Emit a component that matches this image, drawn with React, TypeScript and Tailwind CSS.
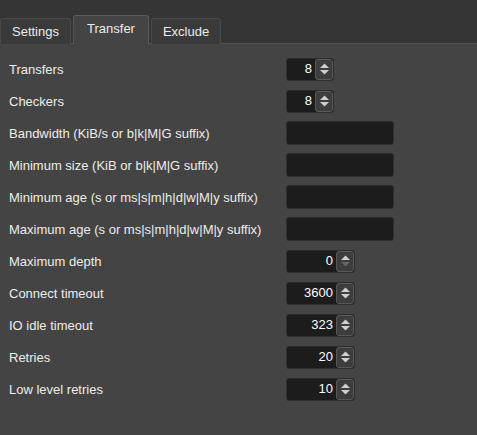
import React from "react";

type Row =
  | { label: string; kind: "spin"; value: string; wide?: boolean; upOnly?: boolean }
  | { label: string; kind: "text" };

const ROWS: Row[] = [
  { label: "Transfers", kind: "spin", value: "8" },
  { label: "Checkers", kind: "spin", value: "8" },
  { label: "Bandwidth (KiB/s or b|k|M|G suffix)", kind: "text" },
  { label: "Minimum size (KiB or b|k|M|G suffix)", kind: "text" },
  { label: "Minimum age (s or ms|s|m|h|d|w|M|y suffix)", kind: "text" },
  { label: "Maximum age (s or ms|s|m|h|d|w|M|y suffix)", kind: "text" },
  { label: "Maximum depth", kind: "spin", value: "0", wide: true, upOnly: true },
  { label: "Connect timeout", kind: "spin", value: "3600", wide: true },
  { label: "IO idle timeout", kind: "spin", value: "323", wide: true },
  { label: "Retries", kind: "spin", value: "20", wide: true },
  { label: "Low level retries", kind: "spin", value: "10", wide: true },
];

function Arrows({ upOnly }: { upOnly?: boolean }) {
  return (
    <svg width="11" height="14" viewBox="0 0 11 14">
      <path d="M1 6 L5.5 1.5 L10 6 Z" fill="#cfcfcf" />
      <path d="M1 8 L5.5 12.5 L10 8 Z" fill={upOnly ? "#666666" : "#cfcfcf"} />
    </svg>
  );
}

function Spin({ value, wide, upOnly }: { value: string; wide?: boolean; upOnly?: boolean }) {
  return (
    <div
      className={`flex h-[23px] rounded-[3px] border border-[#2e2e2e] bg-[#1c1c1c] ${
        wide ? "w-[69px]" : "w-[48px]"
      }`}
    >
      <div className="flex flex-1 items-center justify-end pr-[3px] text-white">{value}</div>
      <div className="flex w-[18px] items-center justify-center rounded-[3px] border border-[#585858] bg-[#3d3d3d]">
        <Arrows upOnly={upOnly} />
      </div>
    </div>
  );
}

export default function App() {
  return (
    <div
      className="h-[435px] w-[477px] overflow-hidden bg-[#444444] text-[13px] text-[#ececec]"
      style={{ fontFamily: "Tahoma, 'Liberation Sans', Arial, sans-serif" }}
    >
      <div className="flex h-[44px] items-end border-b border-[#555555] bg-[#353535]">
        <div className="mb-[-1px] flex items-end gap-[2px]">
          <div className="flex h-[26px] w-[71px] items-center justify-center rounded-t-[3px] border border-b-0 border-[#4a4a4a] bg-[#3a3a3a]">
            Settings
          </div>
          <div className="flex h-[29px] w-[76px] items-center justify-center rounded-t-[3px] border border-b-0 border-[#5a5a5a] bg-[#444444] pb-[2px]">
            Transfer
          </div>
          <div className="flex h-[26px] w-[70px] items-center justify-center rounded-t-[3px] border border-b-0 border-[#4a4a4a] bg-[#3a3a3a]">
            Exclude
          </div>
        </div>
      </div>
      <div className="flex flex-col pt-[9px]">
        {ROWS.map((r) => (
          <div key={r.label} className="flex h-[32px] items-center">
            <div className="w-[286px] whitespace-nowrap pl-[9px] pt-[1px]">{r.label}</div>
            {r.kind === "spin" ? (
              <Spin value={r.value} wide={r.wide} upOnly={r.upOnly} />
            ) : (
              <div className="h-[24px] w-[108px] rounded-[3px] border border-[#2e2e2e] bg-[#1c1c1c]" />
            )}
          </div>
        ))}
      </div>
    </div>
  );
}
